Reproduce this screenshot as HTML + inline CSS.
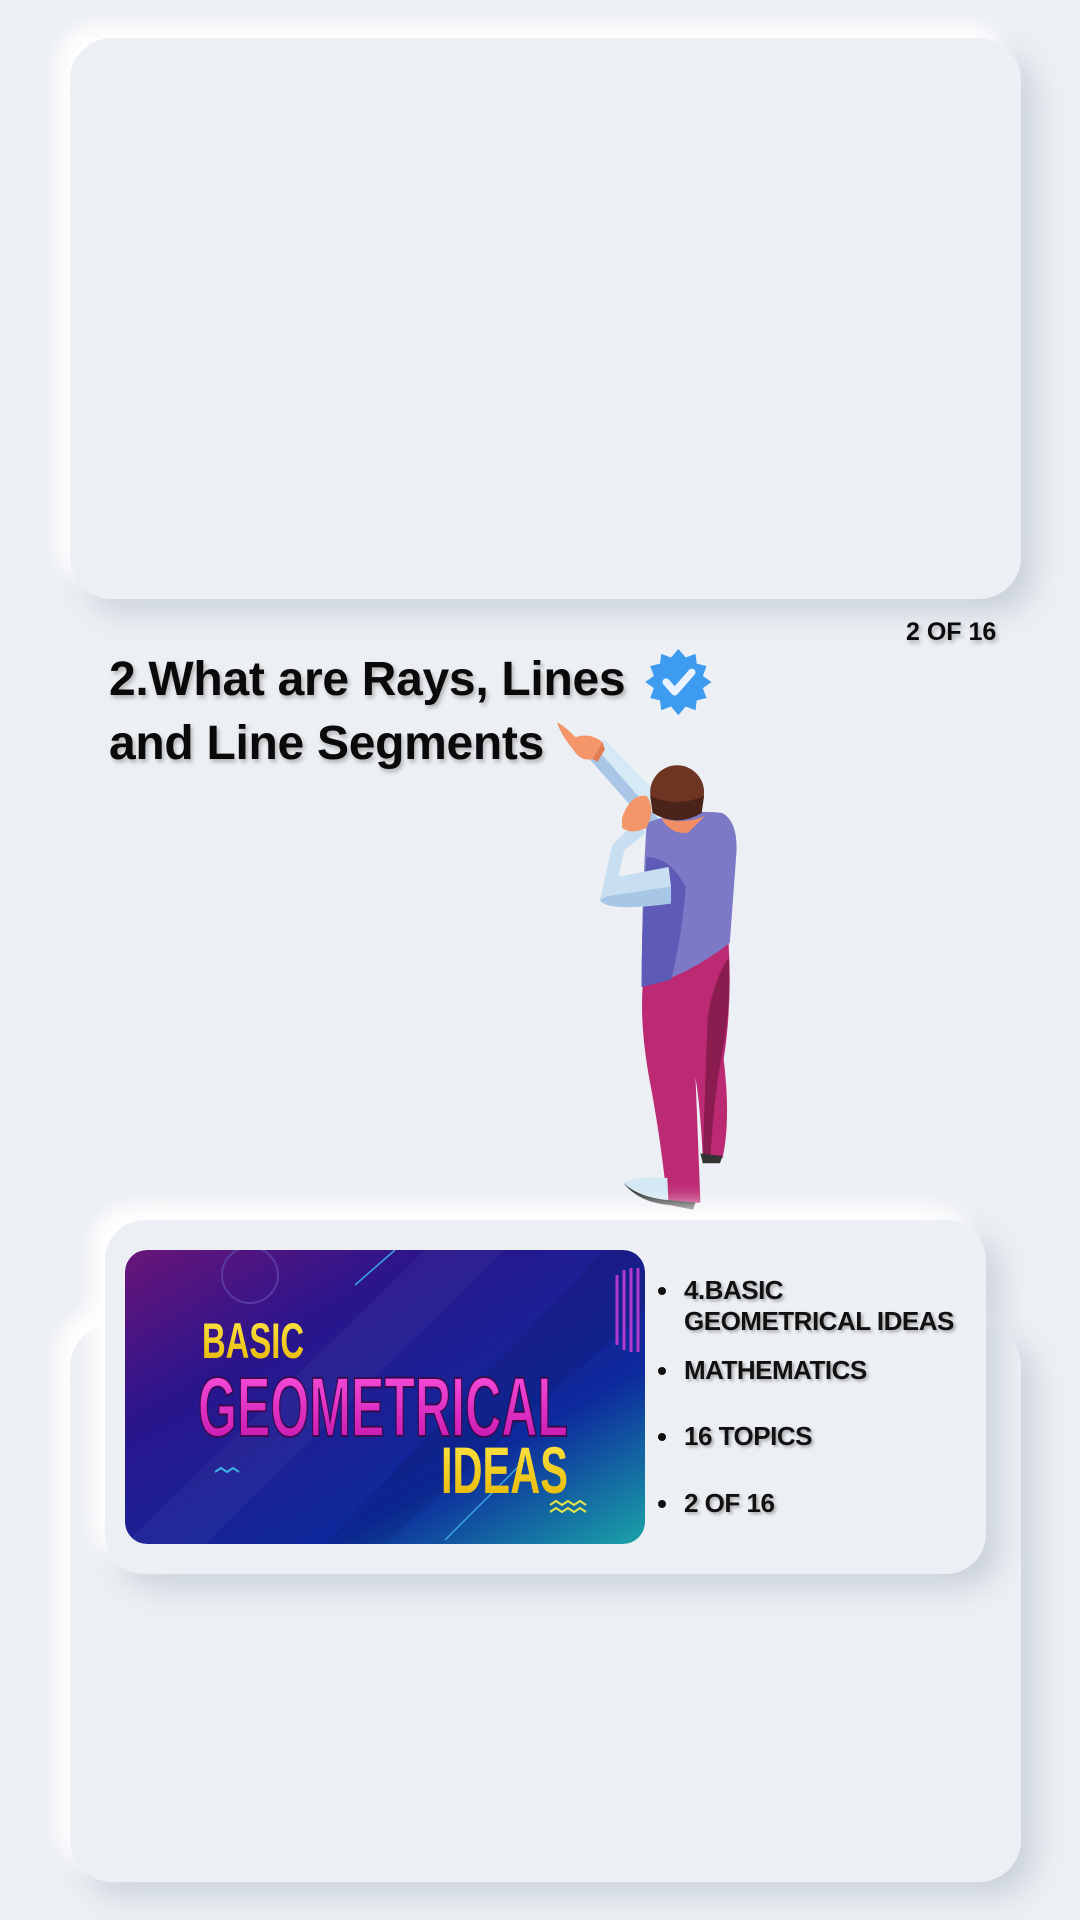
<!DOCTYPE html>
<html><head><meta charset="utf-8"><style>
*{margin:0;padding:0;box-sizing:border-box}
body{width:1080px;height:1920px;background:#eceff3;position:relative;overflow:hidden;font-family:"Liberation Sans",sans-serif;}
.card{position:absolute;background:#eceff3;border-radius:42px;box-shadow:-14px -14px 22px #ffffff,14px 14px 26px rgba(165,175,195,.45);}
.t{position:absolute;font-weight:bold;color:#0a0a0a;text-shadow:2px 3px 4px rgba(0,0,0,.25);white-space:nowrap}
.li{position:absolute;left:684px;font-weight:bold;font-size:26px;color:#111;text-shadow:2px 2px 3px rgba(0,0,0,.3);white-space:nowrap;line-height:31px;letter-spacing:-0.5px}
.dot{position:absolute;left:658px;width:8px;height:8px;border-radius:50%;background:#111}
</style></head><body>
<div class="card" style="left:70px;top:38px;width:951px;height:561px"></div>
<div class="t" style="left:906px;top:618px;font-size:25px">2 OF 16</div>
<div class="t" style="left:109px;top:648px;font-size:48px;line-height:64px;letter-spacing:-0.3px">2.What are Rays, Lines<br>and Line Segments</div>
<svg style="position:absolute;left:0;top:0" width="1080" height="1920" viewBox="0 0 882 1568">
 <g transform="translate(554,557)">
  <polygon fill="#3d9cf0" points="0,-27 6,-20 14,-23 15,-15 23,-13 20,-5 27,0 20,5 23,13 15,15 14,23 6,20 0,27 -6,20 -14,23 -15,15 -23,13 -20,5 -27,0 -20,-5 -23,-13 -15,-15 -14,-23 -6,-20"/>
  <path d="M-10,0 L-3,8 L11,-8" stroke="#e8f3ff" stroke-width="6" fill="none" stroke-linecap="round" stroke-linejoin="round"/>
 </g>
 <polygon fill="#d6eaf6" points="478,616 494,604 552,664 538,684"/>
 <polygon fill="#a9c6e6" points="478,616 486,610 544,676 538,684"/>
 <path d="M455,590 Q460,592 470,602 Q482,598 492,606 L484,620 Q474,622 468,612 Q458,600 455,590Z" fill="#f4956a"/>
 <path d="M484,620 L492,606 L494,612 L488,622Z" fill="#e47a52"/>
 <path d="M525,803 L595,770 Q598,820 591,865 Q597,915 590,946 L574,946 Q572,905 568,880 L572,982 L545,984 Q541,940 532,890 Q522,840 525,803Z" fill="#bc2a73"/>
 <path d="M595,782 Q583,800 578,830 Q576,880 574,946 L580,946 Q583,900 588,870 Q598,820 595,782Z" fill="#8a1c50"/>
 <path d="M509,966 Q520,960 545,962 L546,984 Q525,984 509,966Z" fill="#d4e9f5"/>
 <path d="M509,966 Q522,982 546,984 L566,988 L568,982 L545,980 Q522,978 509,966Z" fill="#333"/>
 <path d="M572,942 L590,944 L588,950 L574,950Z" fill="#333"/>
 <path d="M528,672 Q560,660 590,664 Q604,672 601,702 L596,770 Q560,798 524,806 Q524,740 528,672Z" fill="#7c79c6"/>
 <path d="M528,700 Q548,700 560,725 Q556,770 548,800 L524,806 Q524,750 528,700Z" fill="#5d5bb7"/>
 <path d="M540,668 Q548,682 562,680 L576,666 Q560,674 540,668Z" fill="#f28e66"/>
 <circle cx="553" cy="647" r="22" fill="#6e3522"/>
 <path d="M531,650 Q553,660 575,650 L573,664 Q553,676 533,664Z" fill="#4a2418"/>
 <path d="M518,672 L500,690 L490,735 L548,724 L546,708 L505,716 L510,694 L528,680Z" fill="#c7dff1"/>
 <path d="M490,735 Q495,745 548,738 L548,724 L495,732Z" fill="#a8c6e6"/>
 <path d="M508,668 Q515,648 528,650 Q536,660 528,676 Q516,682 508,676Z" fill="#f4956a"/>
</svg>
<div class="card" style="left:70px;top:1325px;width:951px;height:557px"></div>
<div class="card" style="left:105px;top:1220px;width:881px;height:354px;border-radius:40px"></div>
<svg style="position:absolute;left:125px;top:1250px;border-radius:22px" width="520" height="294" viewBox="0 0 520 294">
 <defs>
  <linearGradient id="bg" x1="0" y1="0" x2="1" y2="1">
   <stop offset="0" stop-color="#6a1578"/><stop offset="0.3" stop-color="#2a158c"/><stop offset="0.7" stop-color="#0d2a9c"/><stop offset="1" stop-color="#1aa3a8"/>
  </linearGradient>
  <linearGradient id="mg" x1="0" y1="0" x2="0" y2="1"><stop offset="0" stop-color="#ff55e0"/><stop offset="1" stop-color="#c010a8"/></linearGradient>
  <linearGradient id="yg" x1="0" y1="0" x2="0" y2="1"><stop offset="0" stop-color="#ffe84a"/><stop offset="1" stop-color="#e6b400"/></linearGradient>
 </defs>
 <rect width="520" height="294" rx="22" fill="url(#bg)"/>
 <polygon points="0,294 300,0 380,0 80,294" fill="#ffffff" opacity=".04"/>
 <polygon points="200,294 480,0 520,0 520,60 260,294" fill="#000" opacity=".08"/>
 <line x1="230" y1="35" x2="270" y2="0" stroke="#39a7e0" stroke-width="1.5"/>
 <line x1="320" y1="290" x2="400" y2="210" stroke="#39a7e0" stroke-width="1.5"/>
 <circle cx="125" cy="25" r="28" fill="none" stroke="#5a3aa0" stroke-width="2"/>
 <g stroke="#b33ad0" stroke-width="3">
  <line x1="492" y1="25" x2="492" y2="95"/><line x1="499" y1="20" x2="499" y2="100"/><line x1="506" y1="18" x2="506" y2="102"/><line x1="513" y1="18" x2="513" y2="102"/>
 </g>
 <text x="77" y="108" font-family="Liberation Sans" font-weight="bold" font-size="50" fill="url(#yg)" textLength="102" lengthAdjust="spacingAndGlyphs">BASIC</text>
 <text x="73" y="186" font-family="Liberation Sans" font-weight="bold" font-size="84" fill="url(#mg)" stroke="#3a0a50" stroke-width="2" textLength="370" lengthAdjust="spacingAndGlyphs">GEOMETRICAL</text>
 <text x="316" y="243" font-family="Liberation Sans" font-weight="bold" font-size="66" fill="url(#yg)" textLength="127" lengthAdjust="spacingAndGlyphs">IDEAS</text>
 <path d="M425,255 l6,-4 l6,4 l6,-4 l6,4 l6,-4 l6,4 M425,262 l6,-4 l6,4 l6,-4 l6,4 l6,-4 l6,4" stroke="#e3e64a" stroke-width="2" fill="none"/>
 <path d="M90,222 l6,-4 l6,4 l6,-4 l6,4" stroke="#3fb0e0" stroke-width="2" fill="none"/>
</svg>
<div class="dot" style="top:1287px"></div>
<div class="li" style="top:1275px">4.BASIC<br>GEOMETRICAL IDEAS</div>
<div class="dot" style="top:1367px"></div>
<div class="li" style="top:1355px">MATHEMATICS</div>
<div class="dot" style="top:1433px"></div>
<div class="li" style="top:1421px">16 TOPICS</div>
<div class="dot" style="top:1500px"></div>
<div class="li" style="top:1488px">2 OF 16</div>
</body></html>
